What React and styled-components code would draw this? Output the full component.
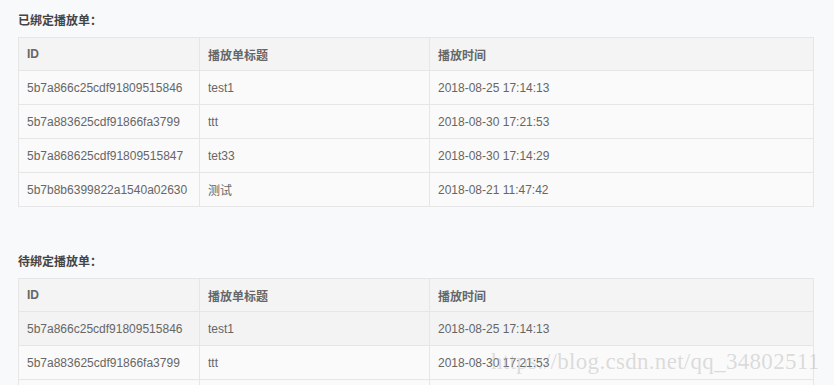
import React from 'react'
import styled, { createGlobalStyle } from 'styled-components'

const GlobalStyle = createGlobalStyle`
  html, body {
    margin: 0;
    padding: 0;
    background: #f8f9fb;
    font-family: "Liberation Sans", Arial, "Noto Sans CJK SC", sans-serif;
    font-size: 12px;
    color: #666;
  }
`

const rows = [
  { id: '5b7a866c25cdf91809515846', title: 'test1', time: '2018-08-25 17:14:13' },
  { id: '5b7a883625cdf91866fa3799', title: 'ttt', time: '2018-08-30 17:21:53' },
  { id: '5b7a868625cdf91809515847', title: 'tet33', time: '2018-08-30 17:14:29' },
  { id: '5b7b8b6399822a1540a02630', title: '测试', time: '2018-08-21 11:47:42' },
]

const Page = styled.div`
  position: relative;
  padding: 14px 0 0 18px;
`

const Section = styled.section`
  margin-bottom: 48px;
`

const Title = styled.h3`
  margin: 0 0 9px;
  font-size: 12px;
  line-height: 14px;
  font-weight: bold;
  color: #444;
`

const Table = styled.table`
  width: 796px;
  border-collapse: collapse;
  table-layout: fixed;
  border: 1px solid #e6e6e6;
`

const Th = styled.th`
  height: 32px;
  padding: 0 8px;
  text-align: left;
  font-weight: bold;
  color: #666;
  background: #f4f4f4;
  border: 1px solid #e6e6e6;
`

const Row = styled.tr`
  background: ${p => (p.$hover ? '#f3f3f3' : '#fafafa')};
`

const Td = styled.td`
  height: 33px;
  padding: 0 8px;
  color: #666;
  border: 1px solid #e6e6e6;
  white-space: nowrap;
`

const Watermark = styled.div`
  position: absolute;
  left: 491px;
  top: 349px;
  font-family: "Liberation Serif", "Times New Roman", serif;
  font-size: 23px;
  letter-spacing: 0.3px;
  color: rgba(180, 180, 180, 0.45);
  pointer-events: none;
  white-space: nowrap;
`

const PlaylistTable = ({ title, hoverFirst }) => (
  <Section>
    <Title>{title}</Title>
    <Table>
      <colgroup>
        <col style={{ width: 181 }} />
        <col style={{ width: 230 }} />
        <col />
      </colgroup>
      <thead>
        <tr>
          <Th>ID</Th>
          <Th>播放单标题</Th>
          <Th>播放时间</Th>
        </tr>
      </thead>
      <tbody>
        {rows.map((r, i) => (
          <Row key={r.id} $hover={hoverFirst && i === 0}>
            <Td>{r.id}</Td>
            <Td>{r.title}</Td>
            <Td>{r.time}</Td>
          </Row>
        ))}
      </tbody>
    </Table>
  </Section>
)

export default function App() {
  return (
    <Page>
      <GlobalStyle />
      <PlaylistTable title="已绑定播放单：" />
      <PlaylistTable title="待绑定播放单：" hoverFirst />
      <Watermark>https://blog.csdn.net/qq_34802511</Watermark>
    </Page>
  )
}
